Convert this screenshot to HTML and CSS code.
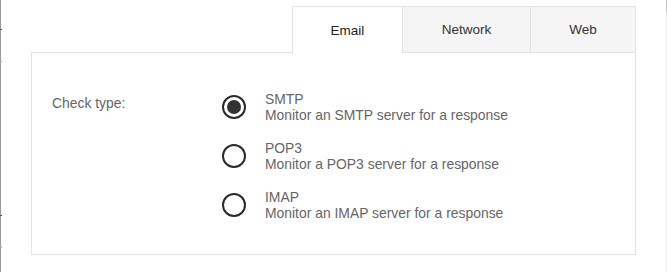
FILE: index.html
```html
<!DOCTYPE html>
<html>
<head>
<meta charset="utf-8">
<link rel="stylesheet" href="styles.css">
</head>
<body>
<div class="page">
  <div class="edge-left"><span class="tick t1"></span><span class="tick t2"></span><span class="tick t3"></span><span class="tick t4"></span></div>
  <div class="edge-right"><span class="thumb"></span></div>
  <div class="widget">
    <div class="tabs">
      <div class="tab active">Email</div>
      <div class="tab network">Network</div>
      <div class="tab web">Web</div>
    </div>
    <div class="panel">
      <div class="label">Check type:</div>
      <div class="options">
        <div class="option">
          <span class="radio checked"></span>
          <div class="text"><div class="title">SMTP</div><div class="desc">Monitor an SMTP server for a response</div></div>
        </div>
        <div class="option">
          <span class="radio"></span>
          <div class="text"><div class="title">POP3</div><div class="desc">Monitor a POP3 server for a response</div></div>
        </div>
        <div class="option">
          <span class="radio"></span>
          <div class="text"><div class="title">IMAP</div><div class="desc">Monitor an IMAP server for a response</div></div>
        </div>
      </div>
    </div>
  </div>
</div>
</body>
</html>
```

FILE: styles.css
```css
html, body { margin: 0; padding: 0; background: #fff; }
body { font-family: "Liberation Sans", Arial, sans-serif; font-size: 13.9px; }
.page { position: relative; width: 667px; height: 272px; overflow: hidden; }
.edge-left { position: absolute; left: 0; top: 0; width: 1px; height: 272px; background: #9a9a9a; }
.tick { position: absolute; left: 0; width: 2px; height: 1px; background: #555; }
.t1 { top: 29px; } .t2 { top: 61px; background: #aaa; } .t3 { top: 215px; background: #555; } .t4 { top: 247px; background: #aaa; }
.edge-right { position: absolute; left: 666px; top: 0; width: 1px; height: 272px; background: #ececec; }
.thumb { position: absolute; left: 0; top: 0; width: 1px; height: 12px; background: #c4c4c4; }
.widget { margin-left: 31px; padding-top: 6px; width: 605px; }
.tabs { display: flex; justify-content: flex-end; height: 47px; }
.tab { box-sizing: border-box; height: 47px; border: 1px solid #e3e3e3; border-right: none; background: #f5f5f5; color: #333; font-size: 13.5px; display: flex; align-items: center; justify-content: center; }
.tab.active { width: 110px; background: #fff; border-bottom: none; height: 48px; position: relative; z-index: 1; color: #222; }
.tab.network { width: 128px; }
.tab.web { width: 106px; border-right: 1px solid #e3e3e3; }
.panel { box-sizing: border-box; height: 202px; border: 1px solid #e3e3e3; border-top: none; display: flex; padding: 38px 0 0 20px; position: relative; }
.panel::before { content: ""; position: absolute; left: -1px; right: -1px; top: -1px; height: 1px; background: #e3e3e3; }
.label { width: 170px; color: #666; line-height: 16px; margin-top: 4px; }
.options { display: flex; flex-direction: column; gap: 17px; }
.option { display: flex; align-items: center; }
.radio { box-sizing: border-box; width: 24px; height: 24px; border: 2px solid #2a2a2a; border-radius: 50%; margin-right: 19px; display: flex; align-items: center; justify-content: center; }
.radio.checked::after { content: ""; width: 14px; height: 14px; border-radius: 50%; background: #333; }
.text { line-height: 16px; color: #666; }
.title { color: #666; }
```
